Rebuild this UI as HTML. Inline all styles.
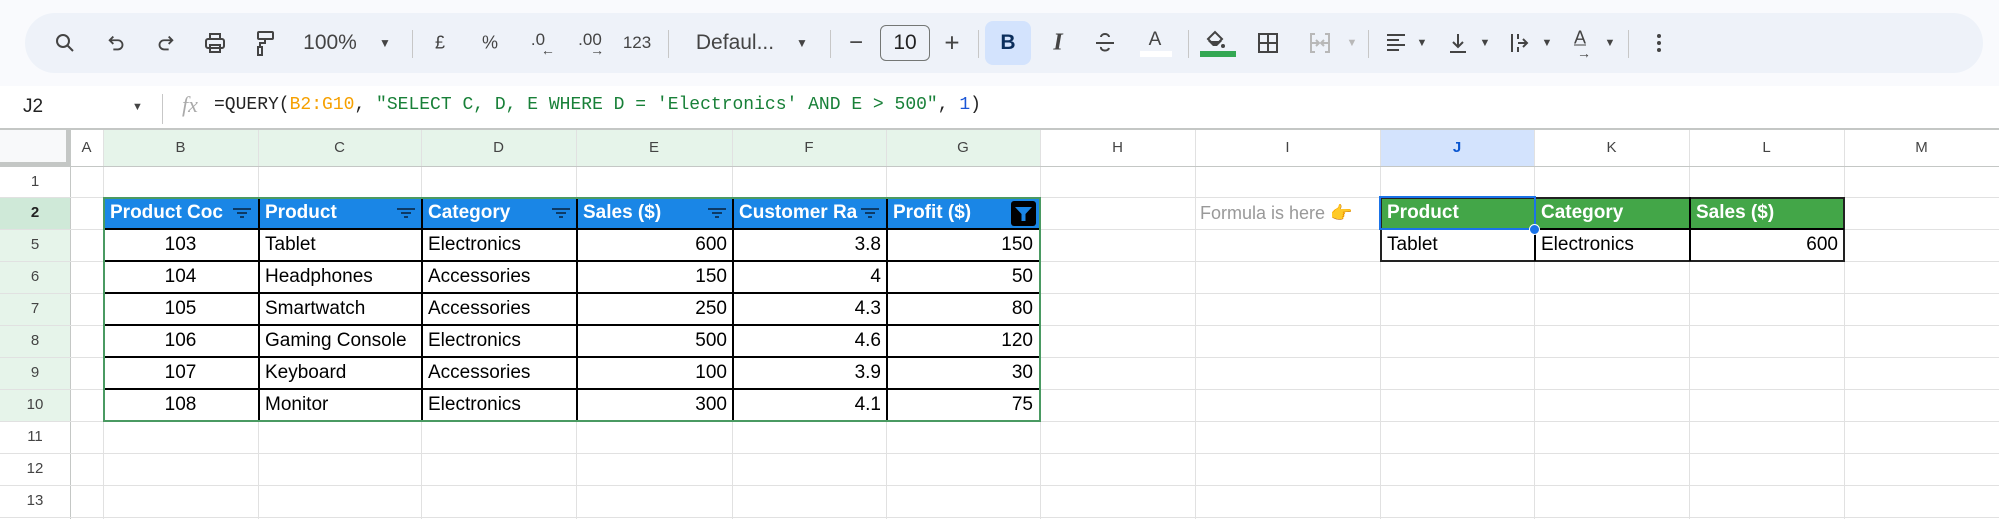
<!DOCTYPE html>
<html><head><meta charset="utf-8">
<style>
*{margin:0;padding:0;box-sizing:border-box}
body{width:1999px;height:519px;background:#fff;position:relative;overflow:hidden;font-family:"Liberation Sans",Arial,sans-serif;color:#000}
.a{position:absolute}
.tb{position:absolute;left:25px;top:13px;width:1958px;height:60px;background:#eef2f9;border-radius:30px}
.ic{position:absolute;top:43px;transform:translate(-50%,-50%);color:#444;font-size:20px;white-space:nowrap}
.sep{position:absolute;top:30px;width:1px;height:28px;background:#c7c7c7}
.vl{position:absolute;width:1px;background:#e1e1e1}
.hl{position:absolute;height:1px;background:#e1e1e1}
.ch{position:absolute;top:130px;height:36px;line-height:36px;text-align:center;font-size:15px;color:#444}
.rh{position:absolute;left:0;width:70px;line-height:32px;text-align:center;font-size:15px;color:#444}
.c{position:absolute;height:32px;line-height:32px;font-size:19px;padding:0 5px;white-space:nowrap;overflow:hidden}
.h{color:#fff;font-weight:bold}
.r{text-align:right}
.ctr{text-align:center}
.bl{position:absolute;background:#000}
</style></head><body>
<div class="a" style="left:0;top:0;width:1999px;height:86px;background:#f9fafd"></div>
<div class="tb"></div>
<div class="a" style="left:985px;top:21px;width:46px;height:44px;background:#d3e3fd;border-radius:8px"></div>
<svg class="a" style="left:53px;top:31px" width="24" height="24" viewBox="0 0 24 24" fill="none" stroke="#444" stroke-width="2"><circle cx="10" cy="10" r="6"/><path d="M14.5 14.5L20 20"/></svg>
<svg class="a" style="left:106px;top:32px" width="22" height="22" viewBox="0 0 24 24" fill="none" stroke="#444" stroke-width="2"><path d="M8 5L4 9l4 4M4 9h9a5 5 0 010 10H8"/></svg>
<svg class="a" style="left:154px;top:32px" width="22" height="22" viewBox="0 0 24 24" fill="none" stroke="#444" stroke-width="2"><path d="M16 5l4 4-4 4M20 9h-9a5 5 0 000 10h5"/></svg>
<svg class="a" style="left:203px;top:31px" width="24" height="24" viewBox="0 0 24 24" fill="none" stroke="#444" stroke-width="2"><rect x="7" y="3" width="10" height="5"/><rect x="3" y="8" width="18" height="9" rx="2"/><rect x="7" y="14" width="10" height="7"/></svg>
<svg class="a" style="left:254px;top:30px" width="24" height="26" viewBox="0 0 24 26" fill="none" stroke="#444" stroke-width="2"><rect x="4" y="2" width="15" height="7" rx="1"/><path d="M11 9v4h-5v4"/><rect x="4" y="17" width="4" height="8"/></svg>
<div class="ic" style="left:330px;font-size:21px">100%</div>
<div class="ic" style="left:385px;font-size:12px">▼</div>
<div class="sep" style="left:412px"></div>
<div class="ic" style="left:440px;font-size:18px">£</div>
<div class="ic" style="left:490px;font-size:18px">%</div>
<div class="ic" style="left:538px;font-size:17px;top:40px">.0<span style="position:absolute;left:10px;top:12px;font-size:14px">←</span></div>
<div class="ic" style="left:590px;font-size:17px;top:40px">.00<span style="position:absolute;left:12px;top:12px;font-size:14px">→</span></div>
<div class="ic" style="left:637px;font-size:17px">123</div>
<div class="sep" style="left:668px"></div>
<div class="ic" style="left:735px;font-size:21px">Defaul...</div>
<div class="ic" style="left:802px;font-size:12px">▼</div>
<div class="sep" style="left:830px"></div>
<div class="ic" style="left:856px;font-size:24px">−</div>
<div class="a" style="left:880px;top:25px;width:50px;height:36px;border:1.5px solid #747775;border-radius:6px;text-align:center;line-height:33px;font-size:21px;color:#222">10</div>
<div class="ic" style="left:952px;font-size:26px">+</div>
<div class="sep" style="left:978px"></div>
<div class="ic" style="left:1008px;font-weight:bold;color:#0b2e5c;font-size:21px">B</div>
<div class="ic" style="left:1058px;font-style:italic;font-family:'Liberation Serif',serif;font-weight:bold;font-size:24px">I</div>
<svg class="a" style="left:1093px;top:31px" width="24" height="24" viewBox="0 0 24 24" fill="none" stroke="#444" stroke-width="2"><path d="M3 12h18M8 6a4 3 0 018 0M8 16a4 3 0 008 1"/></svg>
<div class="ic" style="left:1155px;font-size:19px;top:40px">A</div>
<div class="a" style="left:1140px;top:51px;width:32px;height:6px;background:#fff"></div>
<div class="sep" style="left:1188px"></div>
<svg class="a" style="left:1203px;top:29px" width="24" height="22" viewBox="0 0 24 22" fill="#444"><path d="M5 10l7-7 7 7-5 5H10z" fill="none" stroke="#444" stroke-width="2"/><path d="M5 12h14l-5 5h-4z"/><circle cx="20" cy="17" r="2"/></svg>
<div class="a" style="left:1200px;top:51px;width:36px;height:6px;background:#34a853"></div>
<svg class="a" style="left:1256px;top:31px" width="24" height="24" viewBox="0 0 24 24" fill="none" stroke="#444" stroke-width="2"><rect x="3" y="3" width="18" height="18"/><path d="M12 3v18M3 12h18"/></svg>
<svg class="a" style="left:1308px;top:31px" width="24" height="24" viewBox="0 0 24 24" fill="none" stroke="#b8b8b8" stroke-width="2"><path d="M7 3H3v18h4M17 3h4v18h-4M3 12h7M14 12h7M8 9l3 3-3 3M16 9l-3 3 3 3"/></svg>
<div class="ic" style="left:1352px;font-size:11px;color:#b8b8b8">▼</div>
<div class="sep" style="left:1368px"></div>
<svg class="a" style="left:1384px;top:31px" width="24" height="24" viewBox="0 0 24 24" fill="none" stroke="#444" stroke-width="2"><path d="M3 4h18M3 9h12M3 14h18M3 19h12"/></svg>
<div class="ic" style="left:1422px;font-size:11px">▼</div>
<svg class="a" style="left:1446px;top:31px" width="24" height="24" viewBox="0 0 24 24" fill="none" stroke="#444" stroke-width="2"><path d="M12 3v13M7 11l5 5 5-5M4 21h16"/></svg>
<div class="ic" style="left:1485px;font-size:11px">▼</div>
<svg class="a" style="left:1508px;top:31px" width="24" height="24" viewBox="0 0 24 24" fill="none" stroke="#444" stroke-width="2"><path d="M4 3v18M10 3v5M10 16v5M10 12h9M15 8l4 4-4 4"/></svg>
<div class="ic" style="left:1547px;font-size:11px">▼</div>
<div class="ic" style="left:1580px;font-size:18px;top:38px;text-decoration:underline">A</div>
<div class="ic" style="left:1584px;font-size:14px;top:53px">→</div>
<div class="ic" style="left:1610px;font-size:11px">▼</div>
<div class="sep" style="left:1628px"></div>
<svg class="a" style="left:1652px;top:31px" width="14" height="24" viewBox="0 0 14 24" fill="#444"><circle cx="7" cy="5" r="2"/><circle cx="7" cy="12" r="2"/><circle cx="7" cy="19" r="2"/></svg>

<div class="a" style="left:23px;top:96px;font-size:19px;color:#222">J2</div>
<div class="a" style="left:132px;top:101px;font-size:11px;color:#444">▼</div>
<div class="a" style="left:162px;top:94px;width:1px;height:30px;background:#c7c7c7"></div>
<div class="a" style="left:182px;top:92px;font-size:22px;color:#aaa;font-style:italic;font-family:'Liberation Serif',serif">fx</div>
<div class="a" style="left:214px;top:95px;font-size:18px;font-family:'Liberation Mono',monospace;white-space:nowrap;color:#222">=QUERY(<span style="color:#f6a000">B2:G10</span>, <span style="color:#188038">"SELECT C, D, E WHERE D = 'Electronics' AND E &gt; 500"</span>, <span style="color:#1a55d6">1</span>)</div>
<div class="a" style="left:0;top:128px;width:1999px;height:2px;background:#c4c7c5"></div>

<div class="a" style="left:0;top:130px;width:70px;height:36px;background:#f8f9fa;border-right:4px solid #c4c7c5;border-bottom:4px solid #c4c7c5"></div>
<div class="a" style="left:103px;top:130px;width:937px;height:36px;background:#e6f4ea"></div>
<div class="a" style="left:1380px;top:130px;width:154px;height:36px;background:#d3e3fd"></div>
<div class="a" style="left:0;top:197px;width:70px;height:32px;background:#cfe9d8"></div>
<div class="a" style="left:0;top:229px;width:70px;height:192px;background:#e6f4ea"></div>

<div class="vl" style="left:70px;top:130px;height:389px;background:#c4c7c5"></div>
<div class="vl" style="left:103px;top:130px;height:389px"></div>
<div class="vl" style="left:258px;top:130px;height:389px"></div>
<div class="vl" style="left:421px;top:130px;height:389px"></div>
<div class="vl" style="left:576px;top:130px;height:389px"></div>
<div class="vl" style="left:732px;top:130px;height:389px"></div>
<div class="vl" style="left:886px;top:130px;height:389px"></div>
<div class="vl" style="left:1040px;top:130px;height:389px"></div>
<div class="vl" style="left:1195px;top:130px;height:389px"></div>
<div class="vl" style="left:1380px;top:130px;height:389px"></div>
<div class="vl" style="left:1534px;top:130px;height:389px"></div>
<div class="vl" style="left:1689px;top:130px;height:389px"></div>
<div class="vl" style="left:1844px;top:130px;height:389px"></div>
<div class="hl" style="left:0;top:166px;width:1999px;background:#c4c7c5"></div>
<div class="hl" style="left:0;top:197px;width:1999px"></div>
<div class="hl" style="left:0;top:229px;width:1999px"></div>
<div class="hl" style="left:0;top:261px;width:1999px"></div>
<div class="hl" style="left:0;top:293px;width:1999px"></div>
<div class="hl" style="left:0;top:325px;width:1999px"></div>
<div class="hl" style="left:0;top:357px;width:1999px"></div>
<div class="hl" style="left:0;top:389px;width:1999px"></div>
<div class="hl" style="left:0;top:421px;width:1999px"></div>
<div class="hl" style="left:0;top:453px;width:1999px"></div>
<div class="hl" style="left:0;top:485px;width:1999px"></div>
<div class="hl" style="left:0;top:517px;width:1999px"></div>

<div class="ch" style="left:70px;width:33px">A</div>
<div class="ch" style="left:103px;width:155px">B</div>
<div class="ch" style="left:258px;width:163px">C</div>
<div class="ch" style="left:421px;width:155px">D</div>
<div class="ch" style="left:576px;width:156px">E</div>
<div class="ch" style="left:732px;width:154px">F</div>
<div class="ch" style="left:886px;width:154px">G</div>
<div class="ch" style="left:1040px;width:155px">H</div>
<div class="ch" style="left:1195px;width:185px">I</div>
<div class="ch" style="left:1380px;width:154px;font-weight:bold;color:#0b57d0">J</div>
<div class="ch" style="left:1534px;width:155px">K</div>
<div class="ch" style="left:1689px;width:155px">L</div>
<div class="ch" style="left:1844px;width:155px">M</div>
<div class="rh" style="top:166px">1</div>
<div class="rh" style="top:197px;font-weight:bold;color:#222">2</div>
<div class="rh" style="top:229px">5</div>
<div class="rh" style="top:261px">6</div>
<div class="rh" style="top:293px">7</div>
<div class="rh" style="top:325px">8</div>
<div class="rh" style="top:357px">9</div>
<div class="rh" style="top:389px">10</div>
<div class="rh" style="top:421px">11</div>
<div class="rh" style="top:453px">12</div>
<div class="rh" style="top:485px">13</div>

<div class="a" style="left:103px;top:197px;width:937px;height:32px;background:#1a86e6"></div>
<div class="bl" style="left:258px;top:197px;width:2px;height:224px"></div>
<div class="bl" style="left:421px;top:197px;width:2px;height:224px"></div>
<div class="bl" style="left:576px;top:197px;width:2px;height:224px"></div>
<div class="bl" style="left:732px;top:197px;width:2px;height:224px"></div>
<div class="bl" style="left:886px;top:197px;width:2px;height:224px"></div>
<div class="bl" style="left:103px;top:228px;width:937px;height:2px"></div>
<div class="bl" style="left:103px;top:260px;width:937px;height:2px"></div>
<div class="bl" style="left:103px;top:292px;width:937px;height:2px"></div>
<div class="bl" style="left:103px;top:324px;width:937px;height:2px"></div>
<div class="bl" style="left:103px;top:356px;width:937px;height:2px"></div>
<div class="bl" style="left:103px;top:388px;width:937px;height:2px"></div>
<div class="a" style="left:103px;top:197px;width:938px;height:225px;border:2px solid #4a9a62"></div>

<div class="c h" style="left:105px;top:197px;width:125px">Product Coc</div>
<div class="c h" style="left:260px;top:197px;width:140px">Product</div>
<div class="c h" style="left:423px;top:197px;width:130px">Category</div>
<div class="c h" style="left:578px;top:197px;width:130px">Sales ($)</div>
<div class="c h" style="left:734px;top:197px;width:126px">Customer Ra</div>
<div class="c h" style="left:888px;top:197px;width:130px">Profit ($)</div>
<svg class="a" style="left:232px;top:206px" width="20" height="14" viewBox="0 0 20 14" fill="#0d3a66"><rect x="1" y="2" width="18" height="2"/><rect x="5" y="6" width="10" height="2"/><rect x="8" y="10" width="4" height="2"/></svg>
<svg class="a" style="left:396px;top:206px" width="20" height="14" viewBox="0 0 20 14" fill="#0d3a66"><rect x="1" y="2" width="18" height="2"/><rect x="5" y="6" width="10" height="2"/><rect x="8" y="10" width="4" height="2"/></svg>
<svg class="a" style="left:551px;top:206px" width="20" height="14" viewBox="0 0 20 14" fill="#0d3a66"><rect x="1" y="2" width="18" height="2"/><rect x="5" y="6" width="10" height="2"/><rect x="8" y="10" width="4" height="2"/></svg>
<svg class="a" style="left:707px;top:206px" width="20" height="14" viewBox="0 0 20 14" fill="#0d3a66"><rect x="1" y="2" width="18" height="2"/><rect x="5" y="6" width="10" height="2"/><rect x="8" y="10" width="4" height="2"/></svg>
<svg class="a" style="left:860px;top:206px" width="20" height="14" viewBox="0 0 20 14" fill="#0d3a66"><rect x="1" y="2" width="18" height="2"/><rect x="5" y="6" width="10" height="2"/><rect x="8" y="10" width="4" height="2"/></svg>
<svg class="a" style="left:1011px;top:201px" width="25" height="25" viewBox="0 0 25 25"><rect width="25" height="25" rx="3" fill="#000"/><path d="M4 6h17l-6.5 7v7h-4v-7z" fill="#1a86e6"/></svg>

<div class="c ctr" style="left:103px;top:229px;width:155px">103</div>
<div class="c" style="left:260px;top:229px;width:160px">Tablet</div>
<div class="c" style="left:423px;top:229px;width:152px">Electronics</div>
<div class="c r" style="left:578px;top:229px;width:154px">600</div>
<div class="c r" style="left:734px;top:229px;width:152px">3.8</div>
<div class="c r" style="left:888px;top:229px;width:150px">150</div>

<div class="c ctr" style="left:103px;top:261px;width:155px">104</div>
<div class="c" style="left:260px;top:261px;width:160px">Headphones</div>
<div class="c" style="left:423px;top:261px;width:152px">Accessories</div>
<div class="c r" style="left:578px;top:261px;width:154px">150</div>
<div class="c r" style="left:734px;top:261px;width:152px">4</div>
<div class="c r" style="left:888px;top:261px;width:150px">50</div>

<div class="c ctr" style="left:103px;top:293px;width:155px">105</div>
<div class="c" style="left:260px;top:293px;width:160px">Smartwatch</div>
<div class="c" style="left:423px;top:293px;width:152px">Accessories</div>
<div class="c r" style="left:578px;top:293px;width:154px">250</div>
<div class="c r" style="left:734px;top:293px;width:152px">4.3</div>
<div class="c r" style="left:888px;top:293px;width:150px">80</div>

<div class="c ctr" style="left:103px;top:325px;width:155px">106</div>
<div class="c" style="left:260px;top:325px;width:161px;padding-right:0">Gaming Console</div>
<div class="c" style="left:423px;top:325px;width:152px">Electronics</div>
<div class="c r" style="left:578px;top:325px;width:154px">500</div>
<div class="c r" style="left:734px;top:325px;width:152px">4.6</div>
<div class="c r" style="left:888px;top:325px;width:150px">120</div>

<div class="c ctr" style="left:103px;top:357px;width:155px">107</div>
<div class="c" style="left:260px;top:357px;width:160px">Keyboard</div>
<div class="c" style="left:423px;top:357px;width:152px">Accessories</div>
<div class="c r" style="left:578px;top:357px;width:154px">100</div>
<div class="c r" style="left:734px;top:357px;width:152px">3.9</div>
<div class="c r" style="left:888px;top:357px;width:150px">30</div>

<div class="c ctr" style="left:103px;top:389px;width:155px">108</div>
<div class="c" style="left:260px;top:389px;width:160px">Monitor</div>
<div class="c" style="left:423px;top:389px;width:152px">Electronics</div>
<div class="c r" style="left:578px;top:389px;width:154px">300</div>
<div class="c r" style="left:734px;top:389px;width:152px">4.1</div>
<div class="c r" style="left:888px;top:389px;width:150px">75</div>

<div class="c" style="left:1195px;top:197px;width:185px;color:#999;font-size:18px">Formula is here <span style="color:#f2a42a">👉</span></div>

<div class="a" style="left:1380px;top:197px;width:464px;height:32px;background:#43a648"></div>
<div class="a" style="left:1380px;top:197px;width:465px;height:65px;border:2px solid #222"></div>
<div class="bl" style="left:1534px;top:197px;width:2px;height:64px"></div>
<div class="bl" style="left:1689px;top:197px;width:2px;height:64px"></div>
<div class="bl" style="left:1380px;top:228px;width:464px;height:2px"></div>
<div class="a" style="left:1379px;top:196px;width:157px;height:34px;border:2.5px solid #1a73e8"></div>
<div class="a" style="left:1529px;top:224px;width:11px;height:11px;border-radius:50%;background:#1a73e8;border:1.5px solid #fff"></div>
<div class="c h" style="left:1382px;top:197px;width:150px">Product</div>
<div class="c h" style="left:1536px;top:197px;width:150px">Category</div>
<div class="c h" style="left:1691px;top:197px;width:150px">Sales ($)</div>
<div class="c" style="left:1382px;top:229px;width:150px">Tablet</div>
<div class="c" style="left:1536px;top:229px;width:150px">Electronics</div>
<div class="c r" style="left:1691px;top:229px;width:152px">600</div>
</body></html>
